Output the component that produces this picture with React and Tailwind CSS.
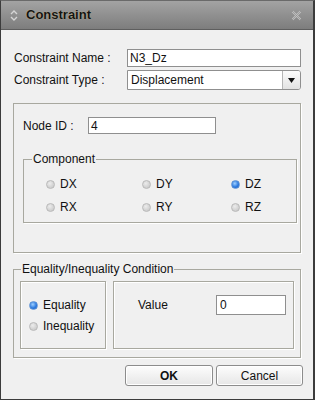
import React from "react";

function Radio({ checked }) {
  return checked ? (
    <span className="inline-block w-[9px] h-[9px] rounded-full border border-[#5f93d4] bg-[radial-gradient(circle_at_40%_35%,#9fd0ff_0%,#2f7ce0_55%,#1b5fc2_100%)] shrink-0" />
  ) : (
    <span className="inline-block w-[9px] h-[9px] rounded-full border border-[#b9b9b9] bg-[radial-gradient(circle_at_40%_35%,#ececec_0%,#d2d2d2_60%,#c6c6c6_100%)] shrink-0" />
  );
}

function RadioItem({ label, checked }) {
  return (
    <div className="flex items-center gap-[5px] h-[16px]">
      <Radio checked={checked} />
      <span>{label}</span>
    </div>
  );
}

export default function App() {
  return (
    <div
      className="w-[315px] h-[400px] flex flex-col bg-[#f0f0f0] border-l border-r-2 border-b border-t border-l-[#3c3c3c] border-r-[#3c3c3c] border-b-[#3c3c3c] border-t-[#6a6a6a] text-[12px] text-[#111] overflow-hidden"
      style={{ fontFamily: '"Liberation Sans", Arial, sans-serif' }}
    >
      {/* Title bar */}
      <div className="h-[29px] flex items-center bg-[linear-gradient(#a3a3a3,#7d7d7d)] border-b border-b-[#5e5e5e] pl-[9px] pr-[11px] shrink-0">
        <svg width="8" height="11" viewBox="0 0 8 11" className="shrink-0">
          <path d="M1 4 L4 1 L7 4" fill="none" stroke="#d6d6d6" strokeWidth="1.4" />
          <path d="M1 7 L4 10 L7 7" fill="none" stroke="#d6d6d6" strokeWidth="1.4" />
        </svg>
        <span className="ml-[8px] font-bold text-[13px] text-[#141414] [text-shadow:0_0_1px_#d8c890]">Constraint</span>
        <svg width="11" height="11" viewBox="0 0 11 11" className="ml-auto">
          <path d="M1.5 1.5 L9.5 9.5 M9.5 1.5 L1.5 9.5" stroke="#c2c2c2" strokeWidth="2" />
          <path d="M1 1 L10 10 M10 1 L1 10" stroke="#8e8e8e" strokeWidth="0.7" />
        </svg>
      </div>

      {/* Body */}
      <div className="flex flex-col px-[12px]">
        <div className="mt-[19px] flex items-center h-[18px]">
          <span className="w-[114px] pl-[1px]">Constraint Name :</span>
          <div className="w-[174px] h-[18px] border border-[#8f8f8f] bg-white flex items-center pl-[2px]">N3_Dz</div>
        </div>
        <div className="mt-[3px] flex items-center h-[20px]">
          <span className="w-[114px] pl-[1px]">Constraint Type :</span>
          <div className="w-[174px] h-[20px] border border-[#8f8f8f] bg-white flex items-center pl-[3px] rounded-r-[3px]">
            <span className="flex-1">Displacement</span>
            <div className="w-[18px] h-full border-l border-[#b5b5b5] rounded-r-[2px] bg-[linear-gradient(#fbfbfb,#e2e2e2)] flex items-center justify-center">
              <svg width="7" height="5" viewBox="0 0 7 5">
                <path d="M0 0 H7 L3.5 5 Z" fill="#111" />
              </svg>
            </div>
          </div>
        </div>

        {/* Group 1 */}
        <div className="mt-[13px] h-[150px] border border-[#a8a89f] shadow-[1px_1px_0_#fff] flex flex-col pl-[9px]">
          <div className="mt-[13px] flex items-center h-[17px]">
            <span className="w-[65px]">Node ID :</span>
            <div className="w-[128px] h-[17px] border border-[#8f8f8f] bg-white flex items-center pl-[2px]">4</div>
          </div>
          <fieldset className="mt-[18px] w-[274px] border border-[#a8a89f] shadow-[1px_1px_0_#fff] pt-[10px] pb-[7px]">
            <legend className="ml-[8px] px-[1px] leading-[14px]">Component</legend>
            <div className="ml-[22px] grid grid-cols-[96px_89px_auto] gap-y-[7px]">
              <RadioItem label="DX" />
              <RadioItem label="DY" />
              <RadioItem label="DZ" checked />
              <RadioItem label="RX" />
              <RadioItem label="RY" />
              <RadioItem label="RZ" />
            </div>
          </fieldset>
        </div>

        {/* Group 2 */}
        <fieldset className="mt-[9px] border border-[#a8a89f] shadow-[1px_1px_0_#fff] pt-[5px] pb-[8px]">
          <legend className="ml-[7px] px-[1px] leading-[14px]">Equality/Inequality Condition</legend>
          <div className="ml-[6px] flex gap-[7px]">
            <div className="w-[86px] h-[68px] border border-[#a8a89f] shadow-[inset_1px_1px_0_#fff,1px_1px_0_#fff] flex flex-col pl-[8px] pt-[15px] gap-[5px]">
              <RadioItem label="Equality" checked />
              <RadioItem label="Inequality" />
            </div>
            <div className="w-[181px] h-[68px] border border-[#a8a89f] shadow-[inset_1px_1px_0_#fff,1px_1px_0_#fff] flex items-start pl-[24px] pt-[13px]">
              <div className="flex items-center h-[20px]">
                <span className="w-[78px]">Value</span>
                <div className="w-[70px] h-[20px] border border-[#8f8f8f] bg-white flex items-center pl-[3px]">0</div>
              </div>
            </div>
          </div>
        </fieldset>

        {/* Buttons */}
        <div className="mt-[7px] flex justify-end gap-[3px] -mr-[2px]">
          <button className="w-[88px] h-[21px] border border-[#8c8c8c] rounded-[3px] bg-[linear-gradient(#fdfdfd,#e6e6e6)] font-bold text-[12px] text-[#111] shadow-[inset_0_0_0_1px_#fff]">
            OK
          </button>
          <button className="w-[87px] h-[21px] border border-[#8c8c8c] rounded-[3px] bg-[linear-gradient(#fdfdfd,#e6e6e6)] text-[12px] text-[#111] shadow-[inset_0_0_0_1px_#fff]">
            Cancel
          </button>
        </div>
      </div>
    </div>
  );
}
